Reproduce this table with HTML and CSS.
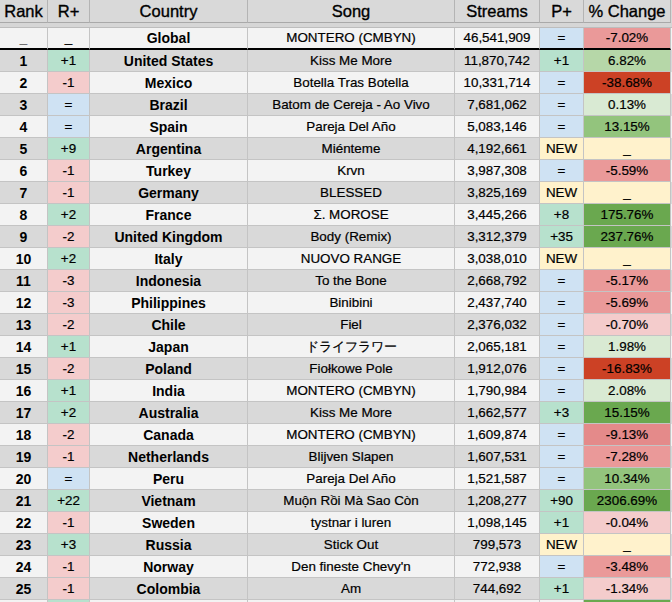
FILE: index.html
```html
<!DOCTYPE html>
<html>
<head>
<meta charset="utf-8">
<link rel="stylesheet" href="styles.css">
</head>
<body>
<div class="sheet">
  <div class="row head">
    <div class="c">Rank</div><div class="c">R+</div><div class="c">Country</div><div class="c">Song</div><div class="c">Streams</div><div class="c">P+</div><div class="c">% Change</div>
  </div>
  <div class="freeze"></div>
  <div class="row light global">
    <div class="c b">_</div><div class="c">_</div><div class="c b">Global</div><div class="c">MONTERO (CMBYN)</div><div class="c">46,541,909</div><div class="c same">=</div><div class="c r1">-7.02%</div>
  </div>
  <div class="row dark"><div class="c b">1</div><div class="c up">+1</div><div class="c b">United States</div><div class="c">Kiss Me More</div><div class="c">11,870,742</div><div class="c up">+1</div><div class="c g1">6.82%</div></div>
  <div class="row light"><div class="c b">2</div><div class="c down">-1</div><div class="c b">Mexico</div><div class="c">Botella Tras Botella</div><div class="c">10,331,714</div><div class="c same">=</div><div class="c r3">-38.68%</div></div>
  <div class="row dark"><div class="c b">3</div><div class="c same">=</div><div class="c b">Brazil</div><div class="c">Batom de Cereja - Ao Vivo</div><div class="c">7,681,062</div><div class="c same">=</div><div class="c g0">0.13%</div></div>
  <div class="row light"><div class="c b">4</div><div class="c same">=</div><div class="c b">Spain</div><div class="c">Pareja Del Año</div><div class="c">5,083,146</div><div class="c same">=</div><div class="c g2">13.15%</div></div>
  <div class="row dark"><div class="c b">5</div><div class="c up">+9</div><div class="c b">Argentina</div><div class="c">Miénteme</div><div class="c">4,192,661</div><div class="c new">NEW</div><div class="c new">_</div></div>
  <div class="row light"><div class="c b">6</div><div class="c down">-1</div><div class="c b">Turkey</div><div class="c">Krvn</div><div class="c">3,987,308</div><div class="c same">=</div><div class="c r1">-5.59%</div></div>
  <div class="row dark"><div class="c b">7</div><div class="c down">-1</div><div class="c b">Germany</div><div class="c">BLESSED</div><div class="c">3,825,169</div><div class="c new">NEW</div><div class="c new">_</div></div>
  <div class="row light"><div class="c b">8</div><div class="c up">+2</div><div class="c b">France</div><div class="c">Σ. MOROSE</div><div class="c">3,445,266</div><div class="c up">+8</div><div class="c g3">175.76%</div></div>
  <div class="row dark"><div class="c b">9</div><div class="c down">-2</div><div class="c b">United Kingdom</div><div class="c">Body (Remix)</div><div class="c">3,312,379</div><div class="c up">+35</div><div class="c g3">237.76%</div></div>
  <div class="row light"><div class="c b">10</div><div class="c up">+2</div><div class="c b">Italy</div><div class="c">NUOVO RANGE</div><div class="c">3,038,010</div><div class="c new">NEW</div><div class="c new">_</div></div>
  <div class="row dark"><div class="c b">11</div><div class="c down">-3</div><div class="c b">Indonesia</div><div class="c">To the Bone</div><div class="c">2,668,792</div><div class="c same">=</div><div class="c r1">-5.17%</div></div>
  <div class="row light"><div class="c b">12</div><div class="c down">-3</div><div class="c b">Philippines</div><div class="c">Binibini</div><div class="c">2,437,740</div><div class="c same">=</div><div class="c r1">-5.69%</div></div>
  <div class="row dark"><div class="c b">13</div><div class="c down">-2</div><div class="c b">Chile</div><div class="c">Fiel</div><div class="c">2,376,032</div><div class="c same">=</div><div class="c r0">-0.70%</div></div>
  <div class="row light"><div class="c b">14</div><div class="c up">+1</div><div class="c b">Japan</div><div class="c">ドライフラワー</div><div class="c">2,065,181</div><div class="c same">=</div><div class="c g0">1.98%</div></div>
  <div class="row dark"><div class="c b">15</div><div class="c down">-2</div><div class="c b">Poland</div><div class="c">Fiołkowe Pole</div><div class="c">1,912,076</div><div class="c same">=</div><div class="c r3">-16.83%</div></div>
  <div class="row light"><div class="c b">16</div><div class="c up">+1</div><div class="c b">India</div><div class="c">MONTERO (CMBYN)</div><div class="c">1,790,984</div><div class="c same">=</div><div class="c g0">2.08%</div></div>
  <div class="row dark"><div class="c b">17</div><div class="c up">+2</div><div class="c b">Australia</div><div class="c">Kiss Me More</div><div class="c">1,662,577</div><div class="c up">+3</div><div class="c g3">15.15%</div></div>
  <div class="row light"><div class="c b">18</div><div class="c down">-2</div><div class="c b">Canada</div><div class="c">MONTERO (CMBYN)</div><div class="c">1,609,874</div><div class="c same">=</div><div class="c r2">-9.13%</div></div>
  <div class="row dark"><div class="c b">19</div><div class="c down">-1</div><div class="c b">Netherlands</div><div class="c">Blijven Slapen</div><div class="c">1,607,531</div><div class="c same">=</div><div class="c r1">-7.28%</div></div>
  <div class="row light"><div class="c b">20</div><div class="c same">=</div><div class="c b">Peru</div><div class="c">Pareja Del Año</div><div class="c">1,521,587</div><div class="c same">=</div><div class="c g2">10.34%</div></div>
  <div class="row dark"><div class="c b">21</div><div class="c up">+22</div><div class="c b">Vietnam</div><div class="c">Muộn Rồi Mà Sao Còn</div><div class="c">1,208,277</div><div class="c up">+90</div><div class="c g3">2306.69%</div></div>
  <div class="row light"><div class="c b">22</div><div class="c down">-1</div><div class="c b">Sweden</div><div class="c">tystnar i luren</div><div class="c">1,098,145</div><div class="c up">+1</div><div class="c r0">-0.04%</div></div>
  <div class="row dark"><div class="c b">23</div><div class="c up">+3</div><div class="c b">Russia</div><div class="c">Stick Out</div><div class="c">799,573</div><div class="c new">NEW</div><div class="c new">_</div></div>
  <div class="row light"><div class="c b">24</div><div class="c down">-1</div><div class="c b">Norway</div><div class="c">Den fineste Chevy'n</div><div class="c">772,938</div><div class="c same">=</div><div class="c r1">-3.48%</div></div>
  <div class="row dark"><div class="c b">25</div><div class="c down">-1</div><div class="c b">Colombia</div><div class="c">Am</div><div class="c">744,692</div><div class="c up">+1</div><div class="c r0">-1.34%</div></div>
  <div class="row light"><div class="c"></div><div class="c up"></div><div class="c"></div><div class="c"></div><div class="c"></div><div class="c"></div><div class="c g3"></div></div>
</div>
</body>
</html>
```

FILE: styles.css
```css
html, body {
  margin: 0;
  padding: 0;
  background: #f3f3f3;
  overflow: hidden;
}

.sheet {
  width: 672px;
  font-family: "Liberation Sans", Arial, sans-serif;
  color: #000;
}

.row {
  display: grid;
  grid-template-columns: 48px 42px 158px 207px 85px 44px 87px 1fr;
  height: 22px;
}

.c {
  box-sizing: border-box;
  border-right: 1px solid #c4c4c4;
  border-bottom: 1px solid #c4c4c4;
  display: flex;
  align-items: flex-end;
  justify-content: center;
  padding-bottom: 2px;
  font-size: 13.4px;
  line-height: 16px;
  white-space: nowrap;
  overflow: hidden;
  -webkit-text-stroke: 0.2px #000;
}

.b {
  font-weight: bold;
  font-size: 14px;
  -webkit-text-stroke: 0;
}

.head {
  height: 23px;
  background: #d9d9d9;
}

.head .c {
  font-size: 16.5px;
  line-height: 19px;
  padding-bottom: 1px;
  border-right: 1px solid #b4b4b4;
  border-bottom: 1px solid #a9a9a9;
  -webkit-text-stroke: 0.35px #000;
}

.freeze {
  height: 4px;
  background: #d6d6d6;
  border-bottom: 1px solid #bdbdbd;
}

.global .c {
  border-bottom: 2px solid #000;
}

.light { background: #f3f3f3; }
.dark { background: #d9d9d9; }

.up { background: #b7e1cd; }
.down { background: #f4cccc; }
.same { background: #cfe2f3; }
.new { background: #fff2cc; }

.r3 { background: #cc4125; }
.r2 { background: #e48a8a; }
.r1 { background: #ea9999; }
.r0 { background: #f4cccc; }
.g0 { background: #d9ead3; }
.g1 { background: #b6d7a8; }
.g2 { background: #93c47d; }
.g3 { background: #6aa84f; }
```
